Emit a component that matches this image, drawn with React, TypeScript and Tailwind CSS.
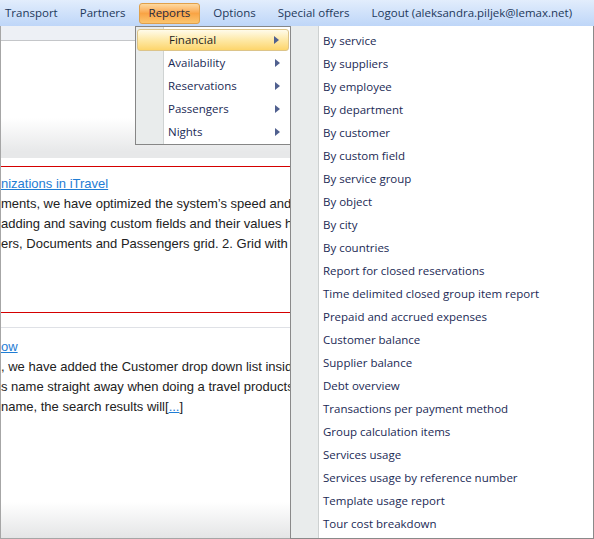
import { useState } from "react";

type MenuItem = { label: string; sub?: boolean };

const topNav = ["Transport", "Partners", "Reports", "Options", "Special offers", "Logout (aleksandra.piljek@lemax.net)"];

const reportGroups: MenuItem[] = [
    { label: "Financial", sub: true },
    { label: "Availability", sub: true },
    { label: "Reservations", sub: true },
    { label: "Passengers", sub: true },
    { label: "Nights", sub: true },
];

const financialReports = [
    "By service",
    "By suppliers",
    "By employee",
    "By department",
    "By customer",
    "By custom field",
    "By service group",
    "By object",
    "By city",
    "By countries",
    "Report for closed reservations",
    "Time delimited closed group item report",
    "Prepaid and accrued expenses",
    "Customer balance",
    "Supplier balance",
    "Debt overview",
    "Transactions per payment method",
    "Group calculation items",
    "Services usage",
    "Services usage by reference number",
    "Template usage report",
    "Tour cost breakdown",
];

const Arrow = () => (
    <svg width="5" height="8" viewBox="0 0 5 8" className="shrink-0">
        <path d="M0 0 L5 4 L0 8 Z" fill="#50608f" />
    </svg>
);

export default function App() {
    const [active, setActive] = useState(0);

    return (
        <div className="relative w-[594px] h-[539px] overflow-hidden bg-white font-['Open_Sans',sans-serif]">
            {/* Top navigation */}
            <nav className="h-[26px] flex items-center bg-gradient-to-b from-[#e2edfc] to-[#bed6f8] text-[11.5px] text-[#1e395b]">
                <div className="flex items-center -ml-[6px]">
                    {topNav.map(item =>
                        item === "Reports" ? (
                            <div
                                key={item}
                                className="h-[21px] mx-[2px] px-[9px] flex items-center rounded-[3px] border border-[#e0a04a] bg-gradient-to-b from-[#fdd9a0] via-[#f9a445] to-[#fbc56e] text-[#1e2a40]"
                            >
                                {item}
                            </div>
                        ) : (
                            <div key={item} className="h-[21px] px-[11px] flex items-center whitespace-nowrap">
                                {item}
                            </div>
                        )
                    )}
                </div>
            </nav>

            {/* Page content (partly hidden under the menus) */}
            <div className="h-[513px] border-l border-b border-[#a6a6a6] flex flex-col overflow-hidden font-['Liberation_Sans',Arial,sans-serif]">
                <div className="h-[15px] shrink-0 bg-[#edf0f5] border-b border-[#c4c6c9]" />
                <div className="h-[77px] shrink-0 bg-white" />
                <div className="h-[34px] shrink-0 bg-gradient-to-b from-white to-[#e7e8e9]" />
                <div className="h-[6px] shrink-0 bg-[#e7e8e9]" />
                <div className="h-[8px] shrink-0 bg-white" />
                <div className="h-[147px] shrink-0 border-t border-b border-[#d40000] pt-[7px] text-[13px] leading-[20px] text-[#222] whitespace-nowrap">
                    <a className="text-[#1f7dd4] underline block">nizations in iTravel</a>
                    <p>ments, we have optimized the system’s speed and</p>
                    <p>adding and saving custom fields and their values h</p>
                    <p>ers, Documents and Passengers grid. 2. Grid with</p>
                </div>
                <div className="h-[15px] shrink-0 border-b border-[#dfe1e6]" />
                <div className="flex-1 pt-[9px] text-[13px] leading-[20px] text-[#222] whitespace-nowrap">
                    <a className="text-[#1f7dd4] underline block">ow</a>
                    <p>, we have added the Customer drop down list insid</p>
                    <p>s name straight away when doing a travel products</p>
                    <p>
                        {" "}name, the search results will[<a className="text-[#1f7dd4] underline">...</a>]
                    </p>
                </div>
                <div className="h-[36px] shrink-0 bg-gradient-to-b from-white to-[#e4e5e6]" />
            </div>

            {/* Reports dropdown */}
            <div className="absolute left-[135px] top-[26px] w-[156px] border border-[#868686] bg-white text-[11.5px] text-[#1b2a55]">
                <div className="flex">
                    <div className="w-[28px] shrink-0 bg-[#e9ecec] border-r border-[#cfd3d3]" />
                    <div className="flex-1 py-[1px]">
                        {reportGroups.map((g, i) => (
                            <div
                                key={g.label}
                                onMouseEnter={() => setActive(i)}
                                className="h-[23px] flex items-center"
                            >
                                <div
                                    className={
                                        i === active
                                            ? "flex-1 h-[22px] -ml-[27px] mr-[1px] pl-[31px] pr-[9px] flex items-center justify-between rounded-[3px] border border-[#dcc48a] bg-gradient-to-b from-[#fffbea] via-[#fee9a6] to-[#fdd56a] text-[#1e1e1e]"
                                            : "flex-1 h-[22px] pl-[4px] pr-[10px] flex items-center justify-between"
                                    }
                                >
                                    <span>{g.label}</span>
                                    {g.sub && <Arrow />}
                                </div>
                            </div>
                        ))}
                    </div>
                </div>
            </div>

            {/* Financial submenu */}
            <div className="absolute left-[290px] top-[26px] w-[304px] h-[513px] border-l border-r border-b border-[#8a8a8a] bg-white flex text-[11.5px] text-[#1b2a55]">
                <div className="w-[28px] shrink-0 bg-[#e9ecec] border-r border-[#cdd1d1]" />
                <div className="flex-1 pt-[3px]">
                    {financialReports.map(r => (
                        <div key={r} className="h-[23px] pl-[4px] flex items-center whitespace-nowrap">
                            {r}
                        </div>
                    ))}
                </div>
            </div>
        </div>
    );
}
